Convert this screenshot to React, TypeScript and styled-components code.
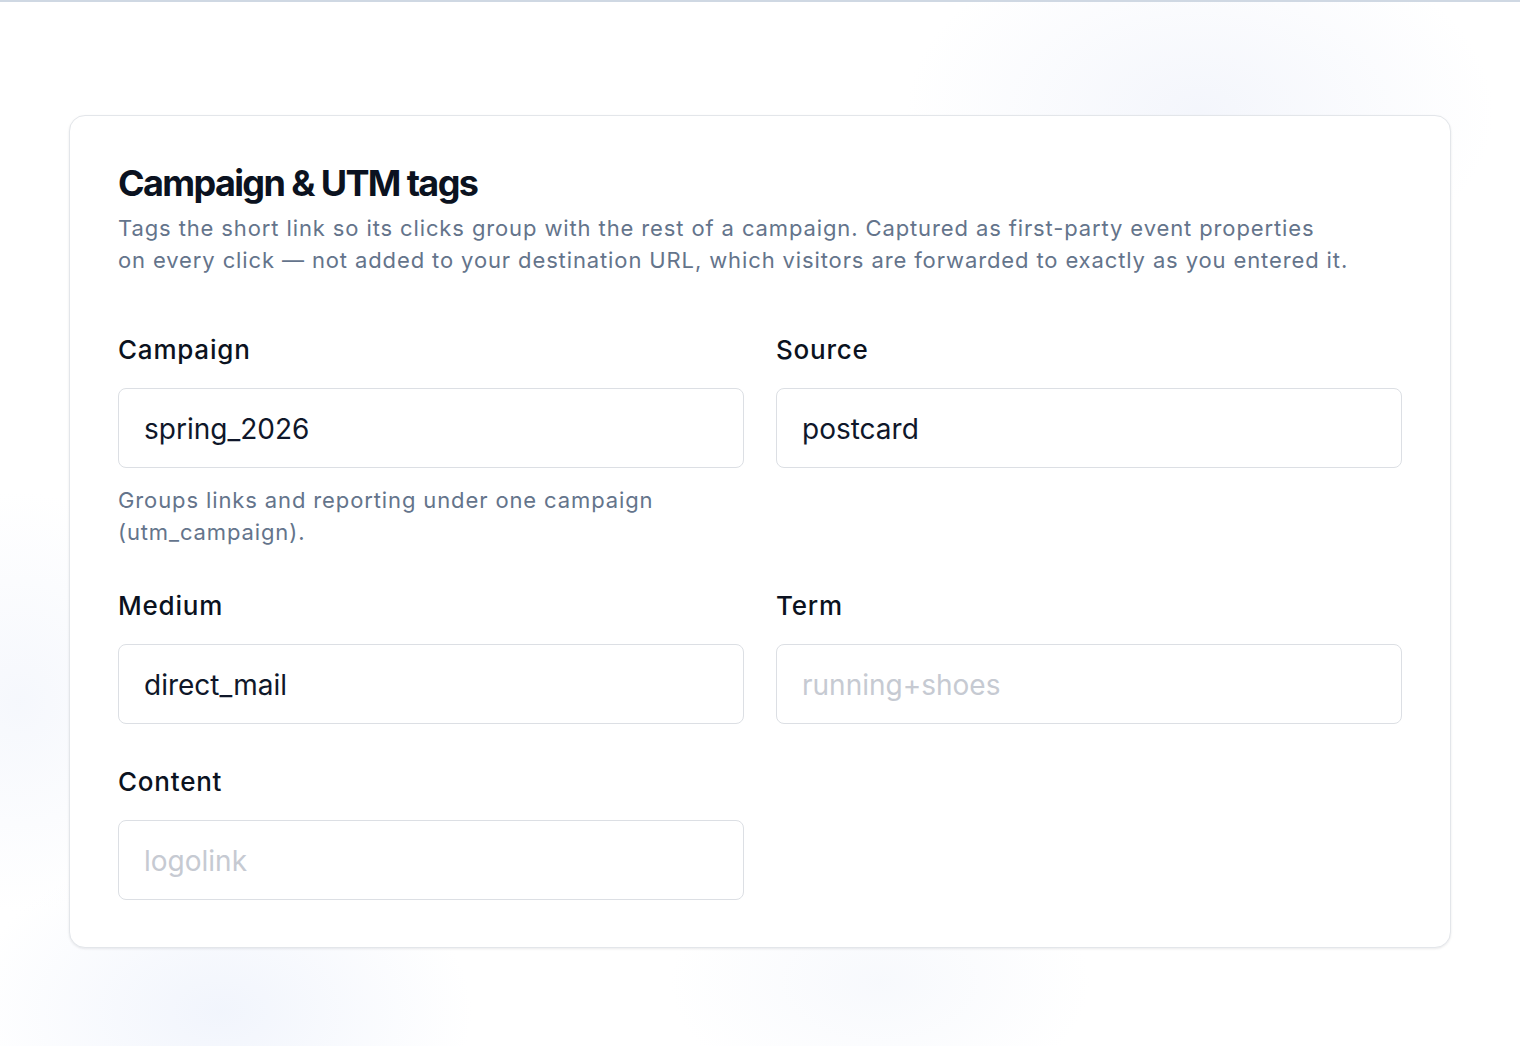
import styled, { createGlobalStyle } from "styled-components";

const GlobalStyle = createGlobalStyle`
  html, body {
    margin: 0;
    padding: 0;
  }
  body {
    font-family: Inter, "Noto Sans", "Liberation Sans", sans-serif;
    background: #ffffff;
    -webkit-font-smoothing: antialiased;
  }
  * {
    box-sizing: border-box;
  }
`;

const Page = styled.main`
  min-height: 1046px;
  border-top: 2px solid #cfd8e3;
  padding: 113px 69px 60px;
  background:
    radial-gradient(ellipse 420px 260px at 1200px 110px, rgba(230, 235, 248, 0.45), transparent 70%),
    radial-gradient(ellipse 360px 240px at 220px 1010px, rgba(228, 235, 250, 0.5), transparent 70%),
    radial-gradient(ellipse 260px 300px at 20px 700px, rgba(234, 239, 250, 0.45), transparent 70%),
    radial-gradient(ellipse 300px 180px at 880px 980px, rgba(238, 242, 250, 0.45), transparent 70%),
    #ffffff;
`;

const Card = styled.section`
  background: #ffffff;
  border: 1px solid #e3e6ea;
  border-radius: 16px;
  padding: 48px 48px 47px;
  box-shadow: 0 1px 3px rgba(15, 23, 42, 0.06), 0 1px 2px rgba(15, 23, 42, 0.03);
`;

const Title = styled.h2`
  margin: 0 0 10px;
  font-size: 36px;
  line-height: 38px;
  font-weight: 700;
  letter-spacing: -0.045em;
  color: #0b1220;
`;

const Description = styled.p`
  margin: 0 0 56px;
  font-size: 22px;
  line-height: 32px;
  letter-spacing: 0.04em;
  white-space: nowrap;
  color: #64748b;
`;

const FieldGrid = styled.div`
  display: grid;
  grid-template-columns: 1fr 1fr;
  column-gap: 32px;
  row-gap: 40px;
  align-items: start;
`;

const Field = styled.div`
  display: flex;
  flex-direction: column;
`;

const Label = styled.label`
  font-size: 26px;
  line-height: 36px;
  font-weight: 500;
  letter-spacing: 0.03em;
  color: #0b1220;
  margin-bottom: 20px;
`;

const Input = styled.input`
  height: 80px;
  width: 100%;
  border: 1px solid #dcdfe4;
  border-radius: 8px;
  padding: 2px 25px 0;
  font-family: inherit;
  font-size: 28px;
  color: #0f172a;
  background: #ffffff;
  outline: none;

  &::placeholder {
    color: #c6cad2;
  }
`;

const Help = styled.p`
  margin: 16px 0 0;
  font-size: 22px;
  line-height: 32px;
  letter-spacing: 0.04em;
  color: #64748b;
`;

const fields = [
  { label: "Campaign", value: "spring_2026", help: "Groups links and reporting under one campaign (utm_campaign)." },
  { label: "Source", value: "postcard" },
  { label: "Medium", value: "direct_mail" },
  { label: "Term", placeholder: "running+shoes" },
  { label: "Content", placeholder: "logolink" },
];

export default function App() {
  return (
    <>
      <GlobalStyle />
      <Page>
        <Card>
          <Title>Campaign &amp; UTM tags</Title>
          <Description>
            Tags the short link so its clicks group with the rest of a campaign. Captured as first-party event properties
            <br />
            on every click — not added to your destination URL, which visitors are forwarded to exactly as you entered it.
          </Description>
          <FieldGrid>
            {fields.map((f) => (
              <Field key={f.label}>
                <Label>{f.label}</Label>
                <Input defaultValue={f.value} placeholder={f.placeholder} />
                {f.help && <Help>{f.help}</Help>}
              </Field>
            ))}
          </FieldGrid>
        </Card>
      </Page>
    </>
  );
}
